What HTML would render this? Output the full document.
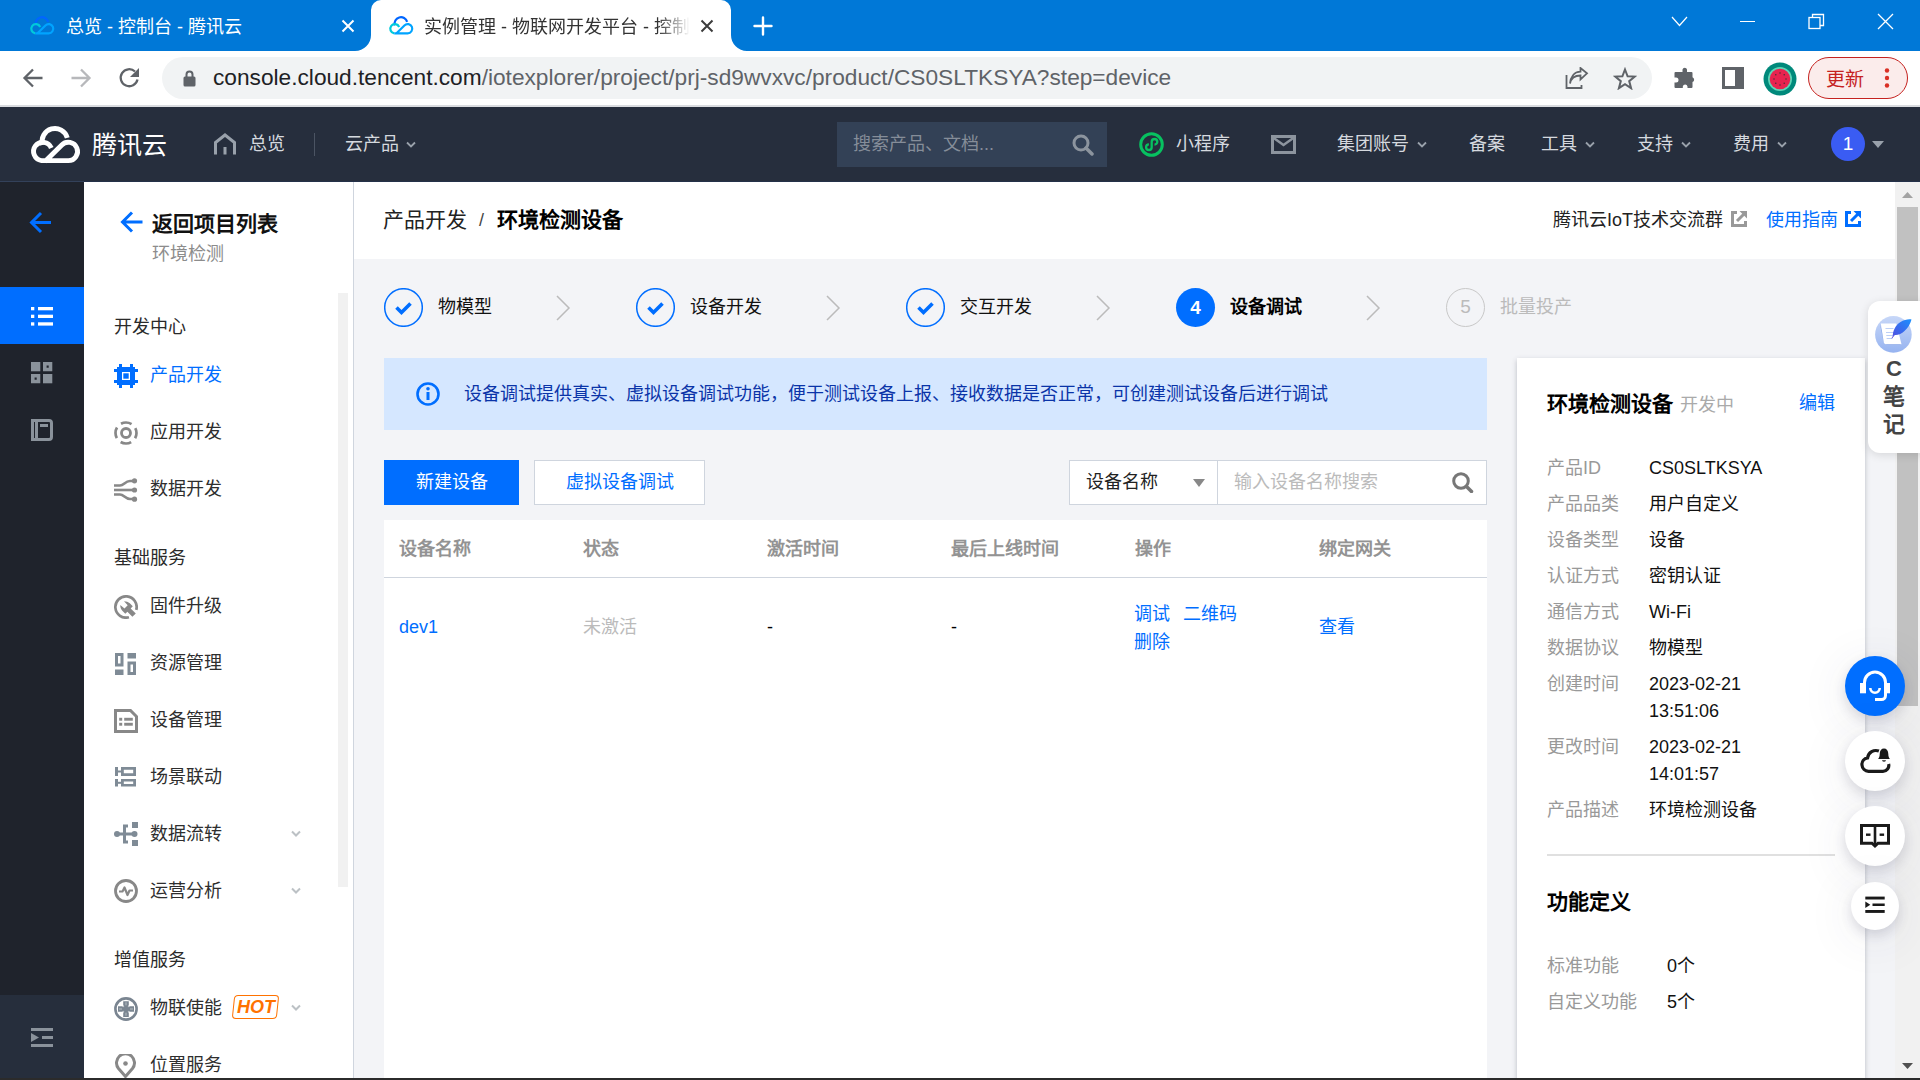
<!DOCTYPE html>
<html lang="zh-CN"><head><meta charset="utf-8">
<style>
*{margin:0;padding:0;box-sizing:border-box}
html,body{width:1920px;height:1080px;overflow:hidden;background:#fff;font-family:"Liberation Sans",sans-serif;font-size:18px;color:#000}
.a{position:absolute;white-space:nowrap}
#tabbar{left:0;top:0;width:1920px;height:51px;background:#0078d7}
#toolbar{left:0;top:51px;width:1920px;height:56px;background:#fff;border-bottom:2px solid #dadce0}
#nav{left:0;top:107px;width:1920px;height:75px;background:#262e3d}
#lside{left:0;top:182px;width:84px;height:898px;background:#1f232c}
#sside{left:84px;top:182px;width:270px;height:898px;background:#fff;border-right:1px solid #cfd5de}
#mhead{left:354px;top:182px;width:1541px;height:77px;background:#fff}
#mbody{left:354px;top:259px;width:1541px;height:821px;background:#f3f4f7}
#vscroll{left:1895px;top:182px;width:25px;height:898px;background:#f1f1f1}
.nt{top:24px;font-size:18px;line-height:26px;color:#d5d9df}
.chev{top:34px;width:10px;height:7px;overflow:visible}
.chev path{fill:none;stroke:#99a1ab;stroke-width:1.8}
.gt{left:30px;margin-top:1px;font-size:18px;line-height:24px;color:#2a2a2a}
.it{left:66px;margin-top:1px;font-size:18px;line-height:24px;color:#2e2e2e}
.sch{left:207px;margin-top:-1px;width:10px;height:7px;overflow:visible}
.sch path{fill:none;stroke:#bcc1c5;stroke-width:2}
.stc{top:29px;width:39px;height:39px}
.stt{top:35px;font-size:18px;line-height:26px;color:#111}
.stv{top:36px;width:14px;height:26px;overflow:visible}
.stv path{fill:none;stroke:#bbb;stroke-width:1.5}
.th{top:277px;font-size:18px;line-height:26px;color:#939393;font-weight:bold}
.td{top:355px;font-size:18px;line-height:26px}
.pl{left:1193px;font-size:18px;line-height:26px;color:#999}
.pv{left:1295px;font-size:18px;line-height:26px;color:#111}
.fb{width:60px;height:60px;border-radius:50%;background:#fff;box-shadow:0 5px 12px rgba(54,58,90,0.16),0 8px 50px rgba(54,58,90,0.10)}
</style></head>
<body>

<div id="tabbar" class="a">
 <!-- inactive tab -->
 <svg class="a" style="left:27px;top:14px" width="30" height="23" viewBox="0 0 60 46"><g fill="none" stroke-width="4.4"><path d="M42.3 15.8A12.7 12.7 0 1 0 17.6 22.8" stroke="#0066ff"/><path d="M26.3 26A9.2 9.2 0 1 0 16.5 38.6" stroke="#00cadb"/><path d="M16.5 38.6H43.3A9.2 9.2 0 1 0 36.8 22.9L20 39.5" stroke="#00a4ff" stroke-linejoin="round"/></g></svg>
 <div class="a" id="t1" style="left:66px;top:15px;color:#fff;font-size:18px;line-height:24px">总览 - 控制台 - 腾讯云</div>
 <svg class="a" style="left:341px;top:19px" width="14" height="14" viewBox="0 0 14 14"><path d="M1.5 1.5L12.5 12.5M12.5 1.5L1.5 12.5" stroke="#fff" stroke-width="2"/></svg>
 <!-- active tab -->
 <svg class="a" style="left:355px;top:0" width="392" height="51" viewBox="0 0 392 51"><path d="M0 51 A16 16 0 0 0 16 35 L16 10 A10 10 0 0 1 26 0 L366 0 A10 10 0 0 1 376 10 L376 35 A16 16 0 0 0 392 51 Z" fill="#fff"/></svg>
 <svg class="a" style="left:386px;top:14px" width="30" height="23" viewBox="0 0 60 46"><g fill="none" stroke-width="4.4"><path d="M42.3 15.8A12.7 12.7 0 1 0 17.6 22.8" stroke="#0066ff"/><path d="M26.3 26A9.2 9.2 0 1 0 16.5 38.6" stroke="#00cadb"/><path d="M16.5 38.6H43.3A9.2 9.2 0 1 0 36.8 22.9L20 39.5" stroke="#00a4ff" stroke-linejoin="round"/></g></svg>
 <div class="a" id="t2" style="left:424px;top:15px;color:#333;font-size:18px;line-height:24px;width:266px;overflow:hidden;-webkit-mask-image:linear-gradient(90deg,#000 88%,transparent)">实例管理 - 物联网开发平台 - 控制台</div>
 <svg class="a" style="left:700px;top:19px" width="14" height="14" viewBox="0 0 14 14"><path d="M1.5 1.5L12.5 12.5M12.5 1.5L1.5 12.5" stroke="#3c3c3c" stroke-width="2"/></svg>
 <svg class="a" style="left:753px;top:16px" width="20" height="20" viewBox="0 0 20 20"><path d="M10 1.5V18.5M1.5 10H18.5" stroke="#fff" stroke-width="2.4" stroke-linecap="round"/></svg>
 <!-- window controls -->
 <svg class="a" style="left:1671px;top:16px" width="17" height="11" viewBox="0 0 17 11"><path d="M1 1L8.5 9.5L16 1" fill="none" stroke="#fff" stroke-width="1.2"/></svg>
 <div class="a" style="left:1740px;top:21px;width:15px;height:1.3px;background:#fff"></div>
 <svg class="a" style="left:1808px;top:13px" width="17" height="17" viewBox="0 0 17 17"><rect x="1" y="4.5" width="11" height="11" fill="none" stroke="#fff" stroke-width="1.3"/><path d="M4.5 4.5V1.5H15.5V12.5H12" fill="none" stroke="#fff" stroke-width="1.3"/></svg>
 <svg class="a" style="left:1877px;top:13px" width="17" height="17" viewBox="0 0 17 17"><path d="M1 1L16 16M16 1L1 16" stroke="#fff" stroke-width="1.3"/></svg>
</div>
<div id="toolbar" class="a">
 <svg class="a" style="left:22px;top:16px" width="22" height="22" viewBox="0 0 22 22"><path d="M20.5 11H3M11 2.5L2.5 11L11 19.5" fill="none" stroke="#5f6368" stroke-width="2.3"/></svg>
 <svg class="a" style="left:70px;top:16px" width="22" height="22" viewBox="0 0 22 22"><path d="M1.5 11H19M11 2.5L19.5 11L11 19.5" fill="none" stroke="#b7b8bb" stroke-width="2.3"/></svg>
 <svg class="a" style="left:118px;top:16px" width="24" height="22" viewBox="0 0 24 22"><path d="M19.5 12.5 A8.5 8.5 0 1 1 17 4.5" fill="none" stroke="#5f6368" stroke-width="2.3"/><path d="M21 1V10H12Z" fill="#5f6368"/></svg>
 <div class="a" style="left:162px;top:6px;width:1490px;height:42px;border-radius:21px;background:#f1f3f4"></div>
 <svg class="a" style="left:183px;top:19px" width="13" height="17" viewBox="0 0 13 17"><path d="M3.5 7V4.5A3 3 0 0 1 9.5 4.5V7" fill="none" stroke="#5f6368" stroke-width="2"/><rect x="0.5" y="6.5" width="12" height="10" rx="1.5" fill="#5f6368"/></svg>
 <div class="a" id="url" style="left:213px;top:13px;font-size:22.7px;line-height:26px;color:#202124">console.cloud.tencent.com<span style="color:#5f6368">/iotexplorer/project/prj-sd9wvxvc/product/CS0SLTKSYA?step=device</span></div>
 <svg class="a" style="left:1565px;top:16px" width="24" height="22" viewBox="0 0 24 22"><path d="M1.5 8V21H16.5V18" fill="none" stroke="#5f6368" stroke-width="1.8"/><path d="M5 16.5C6 11 10 8.5 15.5 8.5V12.5L22 6.3L15.5 1V4.7C9 5 5.5 10 5 16.5Z" fill="none" stroke="#5f6368" stroke-width="1.8" stroke-linejoin="miter"/></svg>
 <svg class="a" style="left:1613px;top:16px" width="24" height="23" viewBox="0 0 24 23"><path d="M12 2.5L14.6 9.3L21.8 9.6L16.2 14.1L18.1 21.2L12 17.2L5.9 21.2L7.8 14.1L2.2 9.6L9.4 9.3Z" fill="none" stroke="#5f6368" stroke-width="2" stroke-linejoin="miter"/></svg>
 <svg class="a" style="left:1674px;top:16px" width="23" height="22" viewBox="0 0 23 22"><path d="M8.5 2.5A2.3 2.3 0 0 1 13 2.5V5H17.5A1 1 0 0 1 18.5 6V10.3A2.5 2.5 0 0 1 18.5 15V20A1 1 0 0 1 17.5 21H13.5V19.5A2.4 2.4 0 0 0 8.8 19.5V21H1.5A1 1 0 0 1 0.5 20V15.5H2A2.5 2.5 0 0 0 2 10.5H0.5V6A1 1 0 0 1 1.5 5H8.5Z" fill="#5f6368"/></svg>
 <svg class="a" style="left:1722px;top:16px" width="22" height="22" viewBox="0 0 22 22"><rect x="1.5" y="1.5" width="19" height="19" fill="none" stroke="#5f6368" stroke-width="3"/><rect x="13" y="1" width="8" height="20" fill="#5f6368"/></svg>
 <svg class="a" style="left:1763px;top:11px" width="34" height="34" viewBox="0 0 34 34"><circle cx="17" cy="17" r="16.5" fill="#00897b"/><circle cx="17" cy="17" r="12" fill="#5ed6b7"/><circle cx="17" cy="17" r="10.3" fill="#e8234f"/><g fill="#333"><circle cx="17" cy="11" r=".7"/><circle cx="17" cy="23" r=".7"/><circle cx="11" cy="17" r=".7"/><circle cx="23" cy="17" r=".7"/><circle cx="12.8" cy="12.8" r=".7"/><circle cx="21.2" cy="21.2" r=".7"/><circle cx="21.2" cy="12.8" r=".7"/><circle cx="12.8" cy="21.2" r=".7"/></g></svg>
 <div class="a" style="left:1808px;top:6px;width:100px;height:42px;border-radius:21px;border:1.5px solid #c5221f;background:#fbeceb"></div>
 <div class="a" style="left:1826px;top:16px;color:#c5221f;font-size:19px;line-height:26px">更新</div>
 <svg class="a" style="left:1883px;top:16px" width="8" height="22" viewBox="0 0 8 22"><circle cx="4" cy="3.5" r="2.2" fill="#d93025"/><circle cx="4" cy="11" r="2.2" fill="#d93025"/><circle cx="4" cy="18.5" r="2.2" fill="#d93025"/></svg>
</div>

<div id="nav" class="a">
 <svg class="a" style="left:25px;top:15px" width="60" height="46" viewBox="0 0 60 46"><g fill="none" stroke="#fff" stroke-width="4.9"><path d="M42.3 15.8A12.7 12.7 0 1 0 17.6 22.8"/><path d="M26.3 26A9.2 9.2 0 1 0 16.5 38.6H43.3A9.2 9.2 0 1 0 36.8 22.9L20 39.5" stroke-linejoin="round"/></g></svg>
 <div class="a" style="left:92px;top:21px;color:#fff;font-size:25px;line-height:34px">腾讯云</div>
 <svg class="a" style="left:213px;top:26px" width="24" height="22" viewBox="0 0 24 22"><path d="M2.5 21.5V9.5L12 2L21.5 9.5V21.5" fill="none" stroke="#99a1ab" stroke-width="3"/><rect x="10.5" y="14" width="3" height="7.5" fill="#99a1ab"/></svg>
 <div class="a nt" style="left:249px">总览</div>
 <div class="a" style="left:314px;top:26px;width:1px;height:23px;background:#4b5463"></div>
 <div class="a nt" style="left:345px">云产品</div>
 <svg class="a chev" style="left:406px"><path d="M1 1.5L5 5.5L9 1.5"/></svg>
 <div class="a" style="left:837px;top:15px;width:270px;height:45px;background:#334156"></div>
 <div class="a nt" style="left:853px;color:#858d99">搜索产品、文档...</div>
 <svg class="a" style="left:1072px;top:27px" width="22" height="22" viewBox="0 0 22 22"><circle cx="9" cy="9" r="7" fill="none" stroke="#8c949e" stroke-width="3"/><path d="M14 14L20 20" stroke="#8c949e" stroke-width="3.5" stroke-linecap="round"/></svg>
 <svg class="a" style="left:1139px;top:25px" width="25" height="25" viewBox="0 0 25 25"><circle cx="12.5" cy="12.5" r="10.8" fill="none" stroke="#07c160" stroke-width="3"/><path d="M15.5 12.6A2.8 2.8 0 1 0 12.7 9.8V15.2A2.8 2.8 0 1 1 9.9 12.4" fill="none" stroke="#07c160" stroke-width="2.3"/></svg>
 <div class="a nt" style="left:1176px">小程序</div>
 <svg class="a" style="left:1271px;top:28px" width="25" height="19" viewBox="0 0 25 19"><rect x="1.5" y="1.5" width="22" height="16" fill="none" stroke="#8c949e" stroke-width="3"/><path d="M2 2.5L12.5 10L23 2.5" fill="none" stroke="#8c949e" stroke-width="2.5"/></svg>
 <div class="a nt" style="left:1337px">集团账号</div>
 <svg class="a chev" style="left:1417px"><path d="M1 1.5L5 5.5L9 1.5"/></svg>
 <div class="a nt" style="left:1469px">备案</div>
 <div class="a nt" style="left:1541px">工具</div>
 <svg class="a chev" style="left:1585px"><path d="M1 1.5L5 5.5L9 1.5"/></svg>
 <div class="a nt" style="left:1637px">支持</div>
 <svg class="a chev" style="left:1681px"><path d="M1 1.5L5 5.5L9 1.5"/></svg>
 <div class="a nt" style="left:1733px">费用</div>
 <svg class="a chev" style="left:1777px"><path d="M1 1.5L5 5.5L9 1.5"/></svg>
 <div class="a" style="left:0;top:74px;width:1920px;height:1px;background:#243149"></div>
 <div class="a" style="left:0;top:74px;width:84px;height:1px;background:#33415a"></div>
 <div class="a" style="left:1831px;top:20px;width:34px;height:34px;border-radius:50%;background:#3a5cf3;color:#fff;font-size:19px;line-height:34px;text-align:center">1</div>
 <svg class="a" style="left:1872px;top:34px" width="12" height="8" viewBox="0 0 12 8"><path d="M0 0H12L6 7Z" fill="#99a1ab"/></svg>
</div>
<div id="lside" class="a">
 <svg class="a" style="left:29px;top:29px" width="23" height="23" viewBox="0 0 23 23"><path d="M22 11.5H3.5M12 2L2.5 11.5L12 21" fill="none" stroke="#006eff" stroke-width="3"/></svg>
 <div class="a" style="left:0;top:105px;width:84px;height:57px;background:#006eff"></div>
 <svg class="a" style="left:31px;top:125px" width="22" height="19" viewBox="0 0 22 19"><g fill="#fff"><rect x="0" y="0" width="3.3" height="3.3"/><rect x="7" y="0" width="15" height="3.3"/><rect x="0" y="7.7" width="3.3" height="3.3"/><rect x="7" y="7.7" width="15" height="3.3"/><rect x="0" y="15.3" width="3.3" height="3.3"/><rect x="7" y="15.3" width="15" height="3.3"/></g></svg>
 <svg class="a" style="left:31px;top:180px" width="22" height="22" viewBox="0 0 22 22"><g fill="#8a929b"><rect x="0" y="0" width="9.3" height="9.3"/><path fill-rule="evenodd" d="M12 0H21.3V9.3H12Z M15.6 3.6V5.7H17.7V3.6Z"/><path fill-rule="evenodd" d="M0 12H9.3V21.3H0Z M3.6 15.6V17.7H5.7V15.6Z"/><rect x="12" y="12" width="9.3" height="9.3"/></g></svg>
 <svg class="a" style="left:31px;top:237px" width="22" height="22" viewBox="0 0 22 22"><path d="M1.5 1.5H18A2.5 2.5 0 0 1 20.5 4V18A2.5 2.5 0 0 1 18 20.5H1.5Z" fill="none" stroke="#8a929b" stroke-width="3"/><rect x="4" y="2" width="3" height="18" fill="#8a929b"/><rect x="9" y="5" width="8" height="3" fill="#8a929b"/></svg>
 <div class="a" style="left:0;top:813px;width:84px;height:85px;background:#262e3c"></div>
 <svg class="a" style="left:31px;top:846px" width="22" height="19" viewBox="0 0 22 19"><g fill="#8a929b"><rect x="0" y="0" width="22" height="3"/><path d="M0 5V14L8 9.5Z"/><rect x="11" y="8" width="11" height="3"/><rect x="0" y="16" width="22" height="3"/></g></svg>
</div>
<div id="sside" class="a">
 <svg class="a" style="left:36px;top:29px" width="23" height="22" viewBox="0 0 23 22"><path d="M22.5 11H3.5M12 1.5L2.5 11L12 20.5" fill="none" stroke="#006eff" stroke-width="3"/></svg>
 <div class="a" style="left:68px;top:28px;font-size:21px;line-height:28px;font-weight:bold;color:#111">返回项目列表</div>
 <div class="a" style="left:68px;top:60px;font-size:18px;line-height:24px;color:#8c8c8c">环境检测</div>
 <div class="a" style="left:254px;top:111px;width:10px;height:594px;background:#f1f1f1"></div>
 <div class="a gt" style="top:132px">开发中心</div>
 <svg class="a" style="left:30px;top:182px" width="24" height="24" viewBox="0 0 24 24"><g fill="#006eff"><path fill-rule="evenodd" d="M3 3H21V21H3Z M7 7V17H17V7Z"/><rect x="9.3" y="9.3" width="5.4" height="5.4"/><rect x="5" y="0" width="3" height="24"/><rect x="16" y="0" width="3" height="24"/><rect x="0" y="5" width="24" height="3"/><rect x="0" y="16" width="24" height="3"/></g><rect x="7" y="7" width="10" height="10" fill="none"/></svg>
 <div class="a it" style="top:180px;color:#006eff">产品开发</div>
 <svg class="a" style="left:30px;top:239px" width="24" height="24" viewBox="0 0 24 24"><circle cx="12" cy="12" r="10.5" fill="none" stroke="#888" stroke-width="2.7" stroke-dasharray="11 5.49" stroke-dashoffset="5.5"/><circle cx="12" cy="12" r="4.5" fill="none" stroke="#888" stroke-width="2.8"/></svg>
 <div class="a it" style="top:237px">应用开发</div>
 <svg class="a" style="left:30px;top:296px" width="24" height="24" viewBox="0 0 24 24"><g fill="none" stroke="#888" stroke-width="2.6"><path d="M0 7.5H6C10 7.5 11 3 16 3H20"/><path d="M0 12H20"/><path d="M0 16.5H6C10 16.5 11 21 16 21H20"/></g><g fill="#888"><circle cx="20.5" cy="2.8" r="2.6"/><circle cx="20.5" cy="12" r="2.6"/><circle cx="20.5" cy="21.2" r="2.6"/></g></svg>
 <div class="a it" style="top:294px">数据开发</div>
 <div class="a gt" style="top:363px">基础服务</div>
 <svg class="a" style="left:30px;top:413px" width="24" height="24" viewBox="0 0 24 24"><path d="M14.94 22.24A10.65 10.65 0 1 1 22.24 14.94" fill="none" stroke="#888" stroke-width="2.7"/><path d="M10 6.2L13.7 10.3L10.5 13.5L6.3 10C6.2 12.3 7 14.3 8.3 15.8L11.3 18.8L13.4 16.7L18.4 21.8L21.8 18.4L16.7 13.4L18.8 11.3L15.8 8.3C14.3 7 12.3 6.2 10 6.2Z" fill="#888"/></svg>
 <div class="a it" style="top:411px">固件升级</div>
 <svg class="a" style="left:31px;top:471px" width="22" height="22" viewBox="0 0 22 22"><g fill="#7f8b96"><path fill-rule="evenodd" d="M0 0H8.5V13.5H0Z M3 3V10.5H5.5V3Z"/><rect x="12.5" y="0" width="8.5" height="5.5"/><path fill-rule="evenodd" d="M12.5 8.5H21V22H12.5Z M15.5 11.5V19H18V11.5Z"/><rect x="0" y="16.5" width="8.5" height="5.5"/></g></svg>
 <div class="a it" style="top:468px">资源管理</div>
 <svg class="a" style="left:30px;top:527px" width="24" height="24" viewBox="0 0 24 24"><path d="M1.5 1.5H16.5L22.5 7.5V22.5H1.5Z" fill="none" stroke="#888" stroke-width="3"/><g fill="#888"><rect x="5.2" y="8.8" width="3" height="2.9"/><rect x="10.2" y="8.8" width="8.6" height="2.9"/><rect x="5.2" y="13.8" width="3" height="2.9"/><rect x="10.2" y="13.8" width="8.6" height="2.9"/></g></svg>
 <div class="a it" style="top:525px">设备管理</div>
 <svg class="a" style="left:31px;top:585px" width="22" height="20" viewBox="0 0 22 20"><g fill="#7f8b96"><rect x="0" y="0" width="3" height="9"/><rect x="3" y="3.5" width="3" height="2"/><path fill-rule="evenodd" d="M6 0H21V9H6Z M8.8 2.7V6.3H18.2V2.7Z"/><rect x="0" y="12" width="3" height="7.5"/><rect x="3" y="14.8" width="3" height="2"/><path fill-rule="evenodd" d="M6 12H21V19.5H6Z M8.8 14.6V17H18.2V14.6Z"/></g></svg>
 <div class="a it" style="top:582px">场景联动</div>
 <svg class="a" style="left:30px;top:640px" width="24" height="24" viewBox="0 0 24 24"><g fill="#7f8b96"><circle cx="3" cy="12" r="3"/><rect x="3" y="10.5" width="18" height="3"/><circle cx="20.5" cy="12" r="3"/><path d="M9 2.5H14V5.5H12V18.5H14V21.5H9Z"/><rect x="18" y="0" width="6" height="6"/><rect x="18" y="18" width="6" height="6"/></g></svg>
 <div class="a it" style="top:639px">数据流转</div>
 <svg class="a sch" style="top:649px"><path d="M1 1.5L5 5.5L9 1.5"/></svg>
 <svg class="a" style="left:30px;top:697px" width="24" height="24" viewBox="0 0 24 24"><circle cx="12" cy="12" r="10.5" fill="none" stroke="#888" stroke-width="2.8"/><path d="M5 12.5H8.5L10.5 8.5L13.5 16L15.5 11.5H19" fill="none" stroke="#888" stroke-width="2.2" stroke-linejoin="round"/></svg>
 <div class="a it" style="top:696px">运营分析</div>
 <svg class="a sch" style="top:706px"><path d="M1 1.5L5 5.5L9 1.5"/></svg>
 <div class="a gt" style="top:765px">增值服务</div>
 <svg class="a" style="left:30px;top:815px" width="24" height="24" viewBox="0 0 24 24"><circle cx="12" cy="12" r="10.6" fill="none" stroke="#7a8591" stroke-width="2.6"/><g fill="#7a8591"><path d="M9.2 4.3H14.8V8.3L13.8 9.3V14.7L14.8 15.7V19.9H9.2V15.7L10.2 14.7V9.3L9.2 8.3Z"/><path d="M4 9.2H8.3L9.3 10.2H14.7L15.7 9.2H20V14.8H15.7L14.7 13.8H9.3L8.3 14.8H4Z"/><rect x="9.3" y="9.3" width="5.4" height="5.4"/></g><g fill="#a6aeb6"><rect x="11.3" y="5.3" width="1.4" height="3"/><rect x="11.3" y="15.7" width="1.4" height="3"/><rect x="5" y="11.3" width="3" height="1.4"/><rect x="16" y="11.3" width="3" height="1.4"/></g></svg>
 <div class="a it" style="top:813px">物联使能</div>
 <div class="a" style="left:149px;top:813px;width:45px;height:24px;border:1.6px solid #ff7200;border-radius:4px;transform:skewX(-6deg)"></div>
 <div class="a" style="left:153px;top:812px;font-size:18px;line-height:26px;color:#ff7200;font-weight:bold;font-style:italic">HOT</div>
 <svg class="a sch" style="top:823px"><path d="M1 1.5L5 5.5L9 1.5"/></svg>
 <svg class="a" style="left:31px;top:872px" width="21" height="24" viewBox="0 0 21 24"><path d="M10.5 22.5L3.5 14.5A9 9 0 1 1 17.5 14.5Z" fill="none" stroke="#888" stroke-width="3" stroke-linejoin="round"/><circle cx="10.5" cy="9.5" r="2.3" fill="#888"/></svg>
 <div class="a it" style="top:870px">位置服务</div>
</div>
<div id="mhead" class="a">
 <div class="a" style="left:29px;top:24px;font-size:21px;line-height:28px;color:#222">产品开发</div>
 <div class="a" style="left:125px;top:24px;font-size:18px;line-height:28px;color:#444">/</div>
 <div class="a" style="left:143px;top:24px;font-size:21px;line-height:28px;color:#000;font-weight:bold">环境检测设备</div>
 <div class="a" style="left:1199px;top:25px;font-size:18px;line-height:26px;color:#222">腾讯云IoT技术交流群</div>
 <svg class="a" style="left:1377px;top:29px" width="16" height="16" viewBox="0 0 16 16"><path d="M6 1.5H1.5V14.5H14.5V10" fill="none" stroke="#999" stroke-width="3"/><path d="M6 10L13 3" stroke="#999" stroke-width="3"/><path d="M8.5 0H16V7.5Z" fill="#999"/></svg>
 <div class="a" style="left:1412px;top:25px;font-size:18px;line-height:26px;color:#006eff">使用指南</div>
 <svg class="a" style="left:1491px;top:29px" width="16" height="16" viewBox="0 0 16 16"><path d="M6 1.5H1.5V14.5H14.5V10" fill="none" stroke="#006eff" stroke-width="3"/><path d="M6 10L13 3" stroke="#006eff" stroke-width="3"/><path d="M8.5 0H16V7.5Z" fill="#006eff"/></svg>
</div>
<div id="mbody" class="a">
 <!-- steps -->
 <div class="a stc" style="left:30px"><svg width="39" height="39" viewBox="0 0 39 39"><circle cx="19.5" cy="19.5" r="18.8" fill="none" stroke="#006eff" stroke-width="1.5"/><path d="M12.5 19.5L17.5 24.5L26.5 15.5" fill="none" stroke="#006eff" stroke-width="3.6"/></svg></div>
 <div class="a stt" style="left:84px">物模型</div>
 <svg class="a stv" style="left:202px"><path d="M1 1L13 13L1 25"/></svg>
 <div class="a stc" style="left:282px"><svg width="39" height="39" viewBox="0 0 39 39"><circle cx="19.5" cy="19.5" r="18.8" fill="none" stroke="#006eff" stroke-width="1.5"/><path d="M12.5 19.5L17.5 24.5L26.5 15.5" fill="none" stroke="#006eff" stroke-width="3.6"/></svg></div>
 <div class="a stt" style="left:336px">设备开发</div>
 <svg class="a stv" style="left:472px"><path d="M1 1L13 13L1 25"/></svg>
 <div class="a stc" style="left:552px"><svg width="39" height="39" viewBox="0 0 39 39"><circle cx="19.5" cy="19.5" r="18.8" fill="none" stroke="#006eff" stroke-width="1.5"/><path d="M12.5 19.5L17.5 24.5L26.5 15.5" fill="none" stroke="#006eff" stroke-width="3.6"/></svg></div>
 <div class="a stt" style="left:606px">交互开发</div>
 <svg class="a stv" style="left:742px"><path d="M1 1L13 13L1 25"/></svg>
 <div class="a stc" style="left:822px;background:#006eff;border-radius:50%;color:#fff;font-weight:bold;font-size:19px;line-height:39px;text-align:center;width:39px;height:39px">4</div>
 <div class="a stt" style="left:876px;font-weight:bold;color:#000">设备调试</div>
 <svg class="a stv" style="left:1012px"><path d="M1 1L13 13L1 25"/></svg>
 <div class="a stc" style="left:1092px;border:1.5px solid #c8c8c8;border-radius:50%;color:#bbb;font-size:19px;line-height:36px;text-align:center;width:39px;height:39px">5</div>
 <div class="a stt" style="left:1146px;color:#bbb">批量投产</div>
 <!-- info banner -->
 <div class="a" style="left:30px;top:99px;width:1103px;height:72px;background:#d5e7ff"></div>
 <svg class="a" style="left:62px;top:123px" width="24" height="24" viewBox="0 0 24 24"><circle cx="12" cy="12" r="10.5" fill="none" stroke="#006eff" stroke-width="2.6"/><rect x="10.5" y="10" width="3" height="8" fill="#006eff"/><circle cx="12" cy="6.8" r="1.8" fill="#006eff"/></svg>
 <div class="a" style="left:110px;top:122px;font-size:18px;line-height:26px;color:#0a34a8">设备调试提供真实、虚拟设备调试功能，便于测试设备上报、接收数据是否正常，可创建测试设备后进行调试</div>
 <!-- buttons -->
 <div class="a" style="left:30px;top:201px;width:135px;height:45px;background:#006eff;color:#fff;font-size:18px;line-height:45px;text-align:center">新建设备</div>
 <div class="a" style="left:180px;top:201px;width:171px;height:45px;background:#fff;border:1px solid #cfd5de;color:#006eff;font-size:18px;line-height:43px;text-align:center">虚拟设备调试</div>
 <div class="a" style="left:715px;top:201px;width:149px;height:45px;background:#fff;border:1px solid #cfd5de"></div>
 <div class="a" style="left:732px;top:210px;font-size:18px;line-height:26px;color:#222">设备名称</div>
 <svg class="a" style="left:839px;top:220px" width="12" height="8" viewBox="0 0 12 8"><path d="M0 0H12L6 8Z" fill="#888"/></svg>
 <div class="a" style="left:863px;top:201px;width:270px;height:45px;background:#fff;border:1px solid #cfd5de"></div>
 <div class="a" style="left:880px;top:210px;font-size:18px;line-height:26px;color:#bbb">输入设备名称搜索</div>
 <svg class="a" style="left:1098px;top:213px" width="22" height="21" viewBox="0 0 22 21"><circle cx="9" cy="9" r="7.3" fill="none" stroke="#777" stroke-width="3"/><path d="M14.5 14.5L19.5 19.5" stroke="#777" stroke-width="3.5" stroke-linecap="round"/></svg>
 <!-- table -->
 <div class="a" style="left:30px;top:261px;width:1103px;height:560px;background:#fff"></div>
 <div class="a" style="left:30px;top:318px;width:1103px;height:1px;background:#cfd5de"></div>
 <div class="a th" style="left:45px">设备名称</div>
 <div class="a th" style="left:229px">状态</div>
 <div class="a th" style="left:413px">激活时间</div>
 <div class="a th" style="left:597px">最后上线时间</div>
 <div class="a th" style="left:781px">操作</div>
 <div class="a th" style="left:965px">绑定网关</div>
 <div class="a td" style="left:45px;color:#006eff">dev1</div>
 <div class="a td" style="left:229px;color:#bbb">未激活</div>
 <div class="a td" style="left:413px;color:#000">-</div>
 <div class="a td" style="left:597px;color:#000">-</div>
 <div class="a" style="left:780px;top:341px;font-size:18px;line-height:28px;color:#006eff">调试<br>删除</div><div class="a" style="left:829px;top:341px;font-size:18px;line-height:28px;color:#006eff">二维码</div>
 <div class="a td" style="left:965px;color:#006eff">查看</div>
 <!-- right panel -->
 <div class="a" style="left:1163px;top:99px;width:348px;height:722px;background:#fff;box-shadow:0 2px 5px rgba(54,58,80,0.3)"></div>
 <div class="a" style="left:1193px;top:131px;font-size:21px;line-height:28px;color:#000;font-weight:bold">环境检测设备</div>
 <div class="a" style="left:1326px;top:133px;font-size:18px;line-height:26px;color:#aaa">开发中</div>
 <div class="a" style="left:1445px;top:131px;font-size:18px;line-height:26px;color:#006eff">编辑</div>
 <div class="a pl" style="top:196px">产品ID</div><div class="a pv" style="top:196px">CS0SLTKSYA</div>
 <div class="a pl" style="top:232px">产品品类</div><div class="a pv" style="top:232px">用户自定义</div>
 <div class="a pl" style="top:268px">设备类型</div><div class="a pv" style="top:268px">设备</div>
 <div class="a pl" style="top:304px">认证方式</div><div class="a pv" style="top:304px">密钥认证</div>
 <div class="a pl" style="top:340px">通信方式</div><div class="a pv" style="top:340px">Wi-Fi</div>
 <div class="a pl" style="top:376px">数据协议</div><div class="a pv" style="top:376px">物模型</div>
 <div class="a pl" style="top:412px">创建时间</div><div class="a pv" style="top:412px;line-height:27px">2023-02-21<br>13:51:06</div>
 <div class="a pl" style="top:475px">更改时间</div><div class="a pv" style="top:475px;line-height:27px">2023-02-21<br>14:01:57</div>
 <div class="a pl" style="top:538px">产品描述</div><div class="a pv" style="top:538px">环境检测设备</div>
 <div class="a" style="left:1193px;top:595px;width:288px;height:2px;background:#e0e0e0"></div>
 <div class="a" style="left:1193px;top:629px;font-size:21px;line-height:28px;color:#000;font-weight:bold">功能定义</div>
 <div class="a pl" style="top:694px">标准功能</div><div class="a pv" style="top:694px;left:1313px">0个</div>
 <div class="a pl" style="top:730px">自定义功能</div><div class="a pv" style="top:730px;left:1313px">5个</div>
</div>
<div id="vscroll" class="a">
 <svg class="a" style="left:7px;top:10px" width="11" height="6" viewBox="0 0 11 6"><path d="M0 6L5.5 0L11 6Z" fill="#a3a3a3"/></svg>
 <div class="a" style="left:2px;top:25px;width:21px;height:499px;background:#c1c1c1"></div>
 <svg class="a" style="left:7px;top:881px" width="11" height="6" viewBox="0 0 11 6"><path d="M0 0L5.5 6L11 0Z" fill="#505050"/></svg>
</div>
<!-- floating widgets -->
<div class="a" style="left:1868px;top:301px;width:60px;height:152px;background:#fff;border-radius:12px 0 0 12px;box-shadow:0 2px 10px rgba(0,0,0,0.12)"></div>
<svg class="a" style="left:1870px;top:310px" width="50" height="50" viewBox="0 0 50 50"><defs><linearGradient id="ng" x1="0" y1="0" x2="0" y2="1"><stop offset="0" stop-color="#c7d7f8"/><stop offset="1" stop-color="#96b3f0"/></linearGradient><linearGradient id="qg" x1="1" y1="0" x2="0" y2="1"><stop offset="0" stop-color="#1a90ff"/><stop offset="1" stop-color="#4f4fe0"/></linearGradient></defs><circle cx="23.4" cy="24.4" r="18.3" fill="url(#ng)"/><path d="M10 14L13.5 31.5C14 34 15.5 35 17.5 35H30.5V33H16Z" fill="#84a3e6"/><path d="M10.8 13.6H26.3L31.5 34.3H16.2C14.8 34.3 14 33.5 13.7 32Z" fill="#fff"/><g stroke="#bccff6" stroke-width="1.1"><path d="M15.5 18.5H23.5M16 22.5H25M16.3 25.5H24.5M16.6 28.5H22.5"/></g><path d="M22.8 27C22.5 21 25.5 15 30.5 12C34 10 38 9 41.5 9.5C40.5 13.5 38 18 34.5 21C31.5 24 27.5 25.5 24.5 25Z" fill="url(#qg)"/><path d="M24 25.3L21.8 28.3" stroke="#6a5ae0" stroke-width="1"/></svg>
<div class="a" style="left:1883px;top:357px;font-size:22px;line-height:24px;color:#444;font-weight:bold;text-align:center;width:22px">C</div>
<div class="a" style="left:1883px;top:383px;font-size:22px;line-height:27.5px;color:#444;font-weight:bold;width:24px">笔<br>记</div>
<div class="a fb" style="left:1845px;top:656px;background:#006eff"><svg width="60" height="60" viewBox="0 0 60 60"><path d="M19.5 37V26.5A10.5 10.5 0 0 1 40.5 26.5V39.5A4 4 0 0 1 36.5 43.5H30" fill="none" stroke="#fff" stroke-width="3"/><rect x="15" y="27" width="6" height="10.3" fill="#fff"/><rect x="39" y="27" width="6" height="10.3" fill="#fff"/><path d="M25.3 32A4.7 4.7 0 0 0 34.7 32" fill="none" stroke="#fff" stroke-width="2.6"/></svg></div>
<div class="a fb" style="left:1845px;top:731px"><svg width="60" height="60" viewBox="0 0 60 60"><path d="M33.9 20.1A8.4 8.4 0 0 0 22.6 26.8A6.8 6.8 0 0 0 23.5 40.3H38A5.8 5.8 0 0 0 43.6 33" fill="none" stroke="#1a1a1a" stroke-width="3.2"/><path d="M33 28H45C44 27 43.3 25.5 43.3 23C43.3 19.5 41.5 17.5 39 17.5C36.5 17.5 34.7 19.5 34.7 23C34.7 25.5 34 27 33 28Z" fill="#1a1a1a"/><path d="M37 29.3A2 1.4 0 0 0 41 29.3Z" fill="#1a1a1a"/></svg></div>
<div class="a fb" style="left:1845px;top:806px"><svg width="60" height="60" viewBox="0 0 60 60"><path d="M16.5 19.5H43.5V37.2H33L30 40L27 37.2H16.5Z" fill="none" stroke="#1a1a1a" stroke-width="3" stroke-linejoin="miter"/><path d="M30 19.5V39" stroke="#1a1a1a" stroke-width="2.6"/><rect x="21" y="27.5" width="4.5" height="2.4" fill="#1a1a1a"/><rect x="34.6" y="27.5" width="4.5" height="2.4" fill="#1a1a1a"/></svg></div>
<div class="a fb" style="left:1851px;top:882px;width:48px;height:48px"><svg width="48" height="48" viewBox="0 0 48 48"><g fill="#1a1a1a"><rect x="14.3" y="14.6" width="19.4" height="2.9"/><path d="M14.3 19.5V26L19.3 22.7Z"/><rect x="21.5" y="21.5" width="12.2" height="2.5"/><rect x="14.3" y="28" width="19.4" height="2.9"/></g></svg></div>
<div class="a" style="left:0;top:1078px;width:1920px;height:2px;background:#2b2b2b"></div>
</body></html>
